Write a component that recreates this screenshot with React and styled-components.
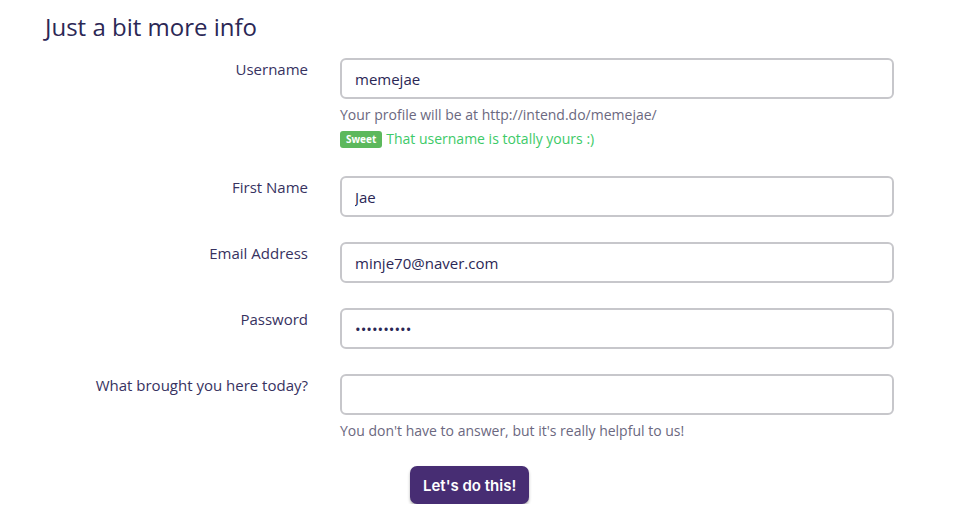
import styled, { createGlobalStyle } from "styled-components";

const GlobalStyle = createGlobalStyle`
    body {
        margin: 0;
        background: #ffffff;
        font-family: "Open Sans", "Noto Sans", sans-serif;
        color: #2e2a58;
    }
`;

const fields = [
    { label: "Username", value: "memejae", type: "text", username: true },
    { label: "First Name", value: "Jae", type: "text" },
    { label: "Email Address", value: "minje70@naver.com", type: "text" },
    { label: "Password", value: "xxxxxxxxxx", type: "password" },
    {
        label: "What brought you here today?",
        value: "",
        type: "text",
        help: "You don't have to answer, but it's really helpful to us!",
    },
];

export default function App() {
    return (
        <>
            <GlobalStyle />
            <Page>
                <Title>Just a bit more info</Title>
                <Form onSubmit={(e) => e.preventDefault()}>
                    {fields.map((field) => (
                        <Row key={field.label}>
                            <Label>{field.label}</Label>
                            <Field>
                                <Input type={field.type} defaultValue={field.value} />
                                {field.username && (
                                    <>
                                        <Help>
                                            Your profile will be at
                                            http://intend.do/memejae/
                                        </Help>
                                        <Success>
                                            <Badge>Sweet</Badge>
                                            That username is totally yours :)
                                        </Success>
                                    </>
                                )}
                                {field.help && <Help>{field.help}</Help>}
                            </Field>
                        </Row>
                    ))}
                    <Actions>
                        <Submit type="submit">Let's do this!</Submit>
                    </Actions>
                </Form>
            </Page>
        </>
    );
}

const Page = styled.div`
    padding: 10px 0 0 45px;
    width: 850px;
`;

const Title = styled.h1`
    margin: 0 0 15px;
    font-size: 24px;
    font-weight: 400;
    line-height: 33px;
    color: #2b2755;
`;

const Form = styled.form`
    display: flex;
    flex-direction: column;
    gap: 25px;
`;

const Row = styled.div`
    display: grid;
    grid-template-columns: 263px 554px;
    column-gap: 32px;
    align-items: start;
`;

const Label = styled.label`
    text-align: right;
    font-size: 15px;
    line-height: 20px;
    padding-top: 1px;
    color: #37325f;
`;

const Field = styled.div`
    display: flex;
    flex-direction: column;
`;

const Input = styled.input`
    box-sizing: border-box;
    width: 554px;
    height: 41px;
    border: 2px solid #c7c7cb;
    border-radius: 6px;
    padding: 0 13px;
    font-family: "Open Sans", "Noto Sans", sans-serif;
    font-size: 15px;
    color: #2b2755;
    outline: none;
`;

const Help = styled.div`
    margin-top: 6px;
    font-size: 14px;
    line-height: 20px;
    color: #6b6880;
`;

const Success = styled.div`
    display: flex;
    align-items: center;
    gap: 4px;
    margin: 4px 0 2px;
    font-size: 14px;
    line-height: 20px;
    color: #3dca68;
`;

const Badge = styled.span`
    display: inline-block;
    background: #5cb85c;
    color: #ffffff;
    font-size: 10px;
    font-weight: 700;
    line-height: 17px;
    padding: 0 6px;
    border-radius: 3px;
`;

const Actions = styled.div`
    padding-left: 365px;
`;

const Submit = styled.button`
    height: 38px;
    padding: 0 13px;
    border: none;
    border-radius: 7px;
    background: #472d73;
    color: #ffffff;
    font-family: "Inter", "Lato", sans-serif;
    font-weight: 600;
    font-size: 15px;
    box-shadow: 0 2px 3px rgba(0, 0, 0, 0.3);
    cursor: pointer;
`;
